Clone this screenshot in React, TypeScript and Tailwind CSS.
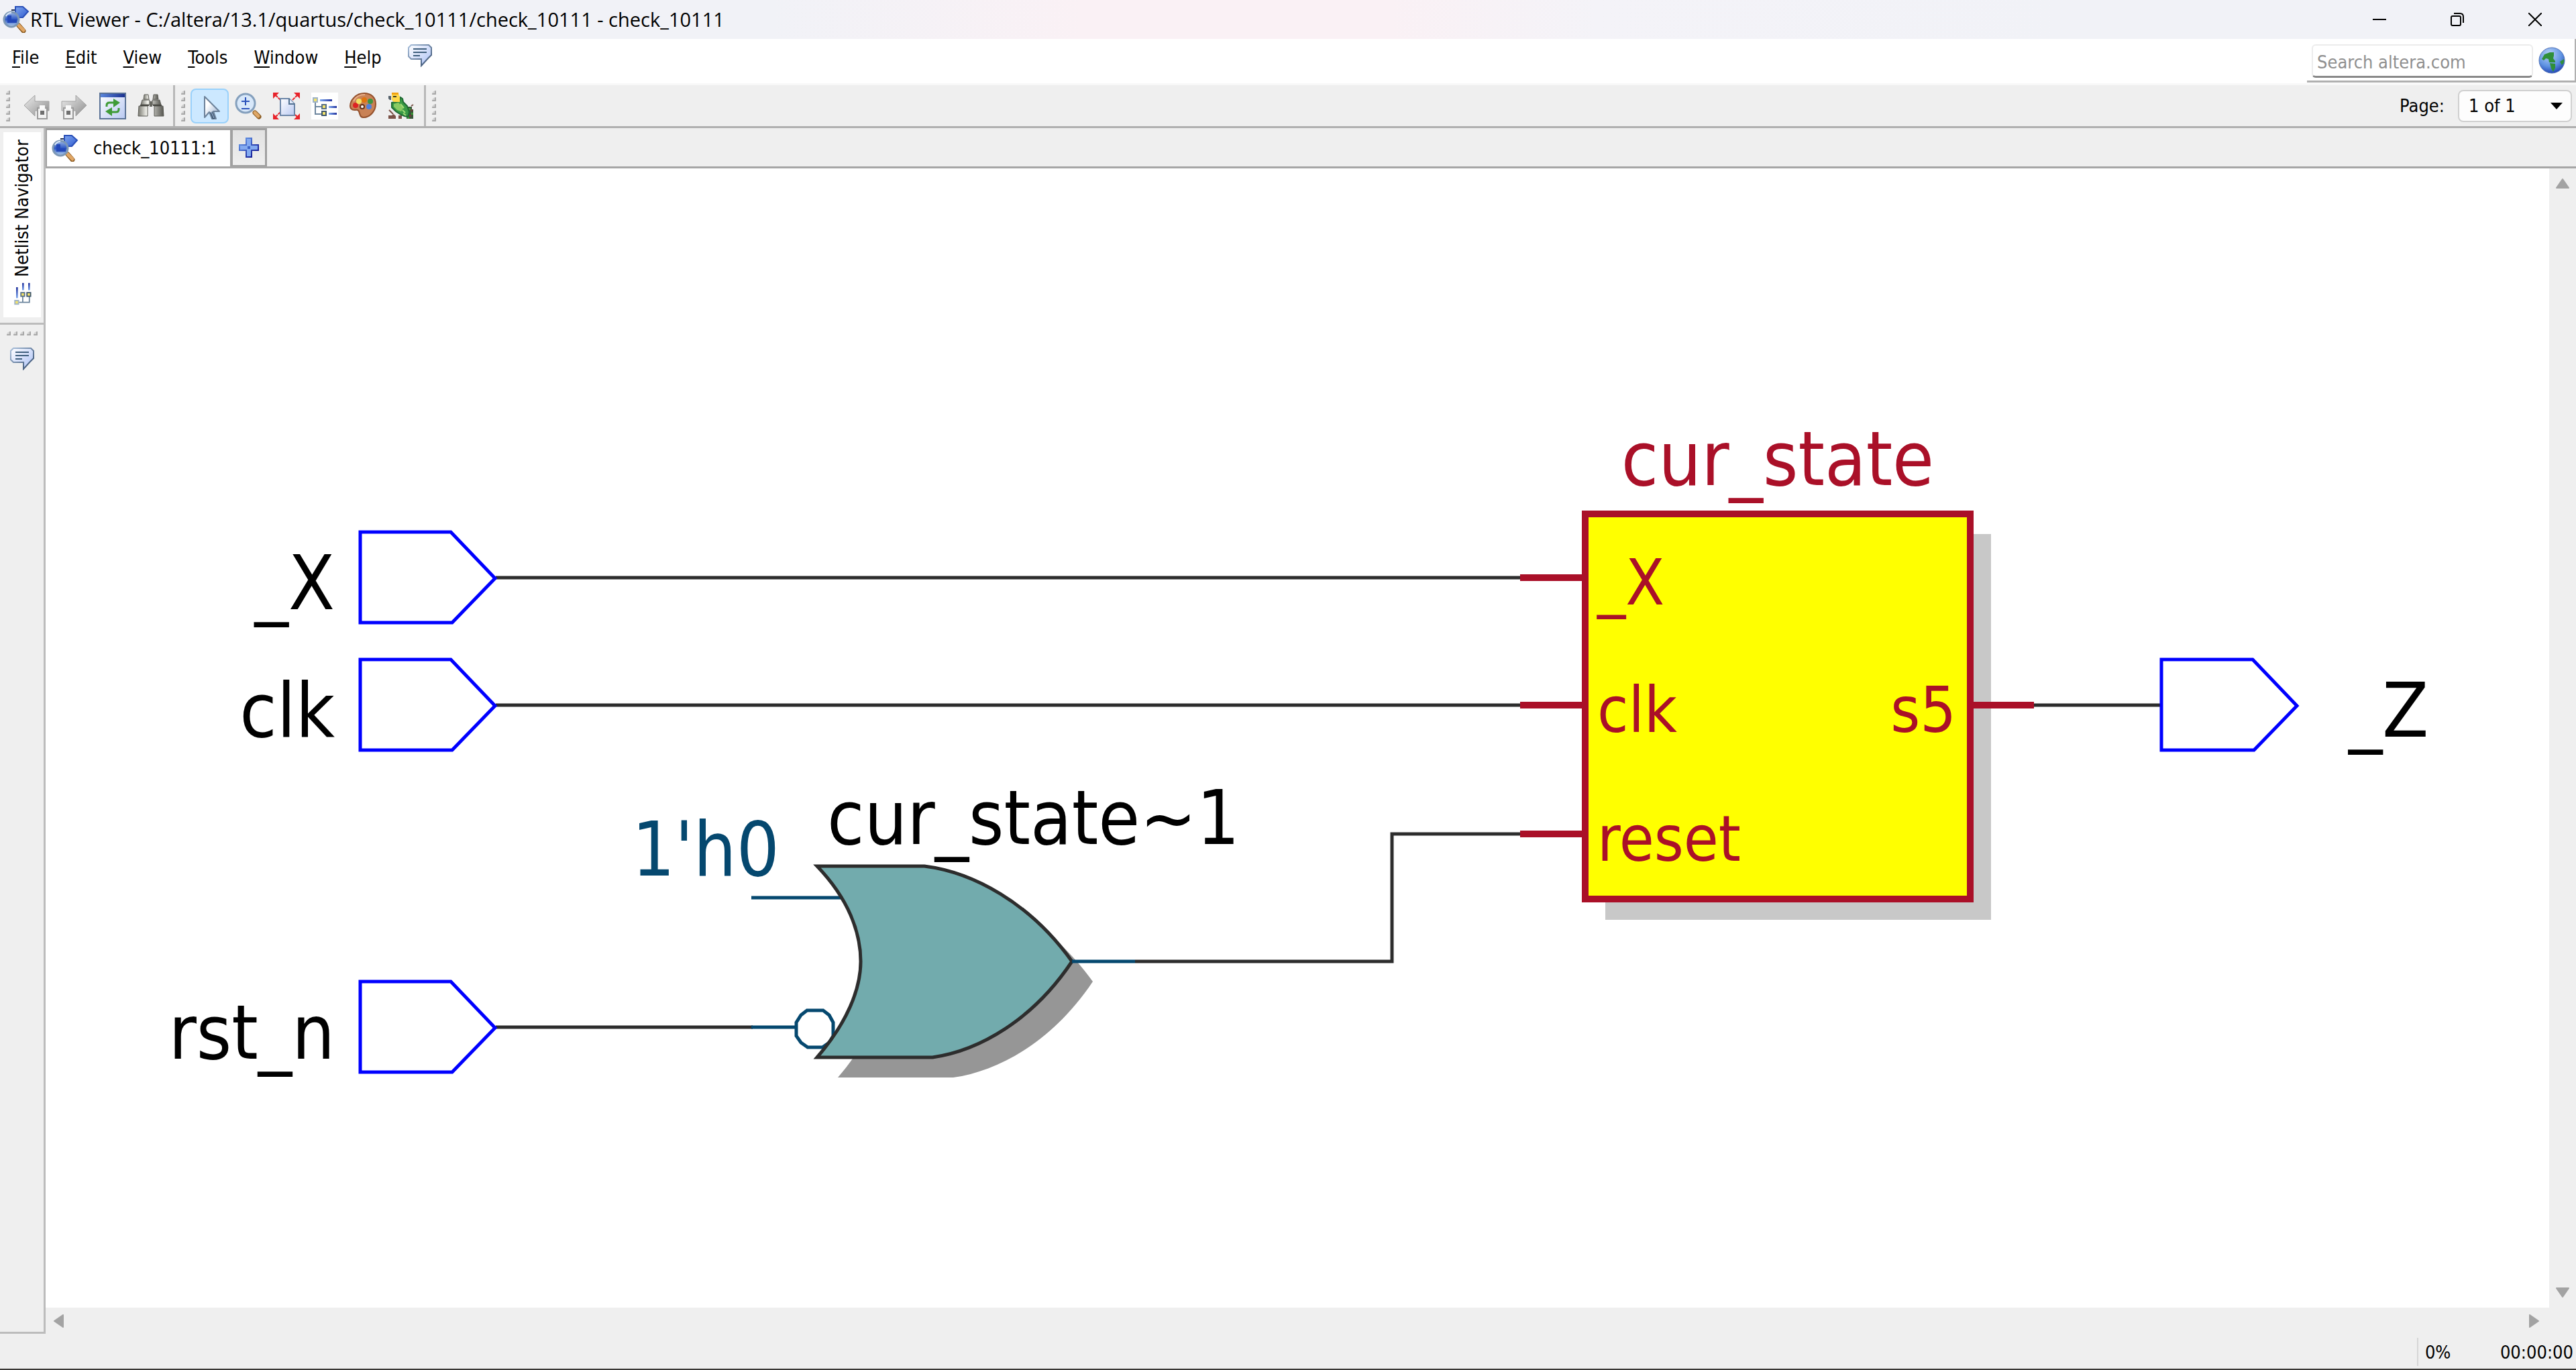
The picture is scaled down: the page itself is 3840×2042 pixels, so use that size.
import type { ReactNode } from "react";

const UI = "font-['DejaVu_Sans_Condensed','DejaVu_Sans',sans-serif]";

function RtlIcon() {
  return (
    <svg viewBox="0 0 40 40" className="h-10 w-10 shrink-0" aria-hidden="true">
      <defs>
        <linearGradient id="pent" x1="0" y1="0" x2="1" y2="1">
          <stop offset="0" stopColor="#7fa6ee" />
          <stop offset="1" stopColor="#2f5bd0" />
        </linearGradient>
        <linearGradient id="lens" x1="0" y1="0" x2="0" y2="1">
          <stop offset="0" stopColor="#9db9e6" />
          <stop offset="0.5" stopColor="#2c56c4" />
          <stop offset="1" stopColor="#b9d6ef" />
        </linearGradient>
      </defs>
      <path d="M13 6h6" stroke="#1f2e50" strokeWidth="2" />
      <path d="M19 1h11l8 7-8 9H19z" fill="url(#pent)" stroke="#2a50b8" strokeWidth="2" />
      <path d="M24 29l7 8" stroke="#8a5a20" strokeWidth="7" strokeLinecap="round" />
      <path d="M24 29l7 7" stroke="#e0a665" strokeWidth="5" strokeLinecap="round" />
      <circle cx="13" cy="20" r="11" fill="url(#lens)" stroke="#7c97b5" strokeWidth="3" />
      <path d="M7 14h6v6h8v5H7z" fill="#2348b8" />
      <path d="M5 15a9 9 0 0 1 8-5" stroke="#dbe8f8" strokeWidth="2" fill="none" />
    </svg>
  );
}

function ChatIcon() {
  return (
    <svg viewBox="0 0 36 34" className="h-[34px] w-9" aria-hidden="true">
      <defs>
        <linearGradient id="chat" x1="0" y1="0" x2="1" y2="1">
          <stop offset="0" stopColor="#ffffff" />
          <stop offset="1" stopColor="#a9bff5" />
        </linearGradient>
        <linearGradient id="chatEdge" x1="0" y1="0" x2="1" y2="1">
          <stop offset="0" stopColor="#a9c0dc" />
          <stop offset="1" stopColor="#31496b" />
        </linearGradient>
      </defs>
      <path d="M5 1h26l4 4v11l-5 5-10 11V22H5l-4-4V5z" fill="url(#chat)" stroke="url(#chatEdge)" strokeWidth="2" />
      <path d="M8 7h20M8 12h20M8 17h10" stroke="#3f5f7d" strokeWidth="2" />
    </svg>
  );
}

function TreeIcon({ className }: { className: string }) {
  return (
    <svg viewBox="0 0 40 40" className={className} aria-hidden="true">
      <defs>
        <linearGradient id="bar" x1="0" y1="0" x2="1" y2="0">
          <stop offset="0" stopColor="#7faaf0" />
          <stop offset="1" stopColor="#20309c" />
        </linearGradient>
      </defs>
      <path d="M6 15v17h10M6 21h10" stroke="#6d869e" strokeWidth="2" fill="none" />
      <rect x="3" y="8" width="6" height="6" fill="#f4e36a" stroke="#9db2c6" strokeWidth="2" />
      <rect x="16" y="18" width="6" height="6" fill="#f4e36a" stroke="#566f86" strokeWidth="2" />
      <rect x="16" y="28" width="6" height="6" fill="#f4e36a" stroke="#3e566c" strokeWidth="2" />
      <rect x="13" y="10" width="18" height="3" fill="url(#bar)" />
      <rect x="26" y="20" width="12" height="3" fill="url(#bar)" />
      <rect x="26" y="30" width="12" height="3" fill="url(#bar)" />
    </svg>
  );
}

function ArrowIcon({ flip }: { flip?: boolean }) {
  return (
    <svg viewBox="0 0 40 40" className="h-10 w-10" aria-hidden="true">
      <defs>
        <linearGradient id="grey" x1="0" y1="0" x2="1" y2="1">
          <stop offset="0" stopColor="#eeeeee" />
          <stop offset="1" stopColor="#8c8c8c" />
        </linearGradient>
      </defs>
      <path
        d={flip ? "M38 19L22 4v9H1v14h21v8z" : "M2 19L18 4v9h21v14H18v8z"}
        fill="url(#grey)"
        stroke="#a2a2a2"
        strokeWidth="1"
      />
      <path d={flip ? "M4 23h14v16H4z" : "M22 23h14v16H22z"} fill="#f2f2f2" stroke="#9a9a9a" strokeWidth="2" />
      <path d={flip ? "M7 19h8v6H7z" : "M25 19h8v6h-8z"} fill="#fafafa" />
      <path d={flip ? "M8 27h6v6H8z" : "M26 27h6v6h-6z"} fill="#6f6f6f" />
    </svg>
  );
}

function RefreshIcon() {
  return (
    <svg viewBox="0 0 40 40" className="h-10 w-10" aria-hidden="true">
      <defs>
        <linearGradient id="win" x1="0" y1="0" x2="1" y2="1">
          <stop offset="0" stopColor="#ffffff" />
          <stop offset="1" stopColor="#b9c9f2" />
        </linearGradient>
        <linearGradient id="winBar" x1="0" y1="0" x2="1" y2="0">
          <stop offset="0" stopColor="#5a86dc" />
          <stop offset="1" stopColor="#1b3190" />
        </linearGradient>
      </defs>
      <rect x="1" y="1" width="38" height="38" fill="url(#win)" stroke="#5a7296" strokeWidth="2" />
      <rect x="2" y="2" width="36" height="5" fill="url(#winBar)" />
      <path d="M11 21v-2q0-4 4-4h7M29 23v2q0 4-4 4h-7" stroke="#3f9b37" strokeWidth="3" fill="none" />
      <path d="M21 9l10 6-10 7zM19 22l-10 6 10 7z" fill="#3f9b37" />
    </svg>
  );
}

function BinocularsIcon() {
  return (
    <svg viewBox="0 0 40 40" className="h-10 w-10" aria-hidden="true">
      <defs>
        <linearGradient id="metal" x1="0" y1="0" x2="1" y2="0">
          <stop offset="0" stopColor="#77776f" />
          <stop offset="0.35" stopColor="#f8f8f2" />
          <stop offset="1" stopColor="#55554f" />
        </linearGradient>
      </defs>
      <g fill="url(#metal)" stroke="#5b5b55" strokeWidth="1">
        <path d="M10 3h6l1 7H9zM24 3h6l1 7h-8z" />
        <path d="M7 11h11v7H5zM22 11h11l2 7H22z" />
        <path d="M2 20h13v15H1zM25 20h13l1 15H25z" />
      </g>
      <path d="M18 13h4v8h-4z" fill="#66665f" />
      <path d="M4 19h13M23 19h13" stroke="#45453f" strokeWidth="2" />
    </svg>
  );
}

function PointerIcon() {
  return (
    <svg viewBox="0 0 40 40" className="h-10 w-10" aria-hidden="true">
      <defs>
        <linearGradient id="ptr" x1="0" y1="0" x2="1" y2="1">
          <stop offset="0.3" stopColor="#ffffff" />
          <stop offset="1" stopColor="#8aa3c8" />
        </linearGradient>
      </defs>
      <path
        d="M12 6v31l7-8 4 10h6l-4-11h9z"
        fill="url(#ptr)"
        stroke="#6c8199"
        strokeWidth="2"
        strokeLinejoin="round"
      />
      <path d="M22 29l4 10" stroke="#3d566f" strokeWidth="4" />
      <path d="M22 29l4 9" stroke="#b8cdf0" strokeWidth="1" />
    </svg>
  );
}

function ZoomIcon() {
  return (
    <svg viewBox="0 0 40 40" className="h-10 w-10" aria-hidden="true">
      <path d="M30 30l6 6" stroke="#8a5a20" strokeWidth="7" strokeLinecap="round" />
      <path d="M30 30l5 5" stroke="#dfa766" strokeWidth="5" strokeLinecap="round" />
      <circle cx="16" cy="16" r="14" fill="#d8e8fa" stroke="#85a0bd" strokeWidth="3" />
      <path d="M16 7v12M10 13h12M10 24h12" stroke="#2c53bb" strokeWidth="2" />
    </svg>
  );
}

function FitIcon() {
  return (
    <svg viewBox="0 0 40 40" className="h-10 w-10" aria-hidden="true">
      <path d="M2 2l9 9M38 2l-9 9M2 38l9-9M38 38l-9-9" stroke="#e8222a" strokeWidth="2" strokeDasharray="7 1" />
      <path d="M0 0h9L0 9zM40 0v9L31 0zM0 40v-9l9 9zM40 40h-9l9-9z" fill="#e8222a" />
      <path d="M11 9h13l8 8v17H11z" fill="url(#win)" stroke="#6c86a8" strokeWidth="2" />
      <path d="M24 9v8h8" fill="#dfe9fa" stroke="#51708f" strokeWidth="2" />
    </svg>
  );
}

function PaletteIcon() {
  return (
    <svg viewBox="0 0 40 40" className="h-10 w-10" aria-hidden="true">
      <path
        d="M22 1C10 1 1 11 1 20c0 5 3 6 7 6 5-1 6 1 7 5s2 6 6 6c10 0 18-10 18-20C39 7 32 1 22 1z"
        fill="#c98256"
        stroke="#93502c"
        strokeWidth="2"
      />
      <path d="M6 13C9 6 16 3 23 3" stroke="#e9b08c" strokeWidth="2" fill="none" />
      <circle cx="9" cy="19" r="4" fill="#dd2323" />
      <circle cx="14" cy="13" r="4" fill="#f3e163" />
      <circle cx="22" cy="11" r="4" fill="#e0750c" />
      <circle cx="31" cy="13" r="4" fill="#3f9440" />
      <circle cx="29" cy="21" r="4" fill="#4f80dd" />
      <circle cx="19" cy="21" r="3" fill="#ffffff" stroke="#60301a" strokeWidth="2" />
    </svg>
  );
}

function ParrotIcon() {
  return (
    <svg viewBox="0 0 40 40" className="h-10 w-10" aria-hidden="true">
      <path d="M1 34h5l3-2 3 3v4H1zM16 34h5v5h-5z" fill="#7a5146" />
      <path d="M2 26l6 6M35 20l3-2" stroke="#7a5146" strokeWidth="2" />
      <path d="M26 25h4v-4h6v4h2v14H28v-5h-4z" fill="#39553a" />
      <path d="M28 27h3v3h-3zM34 25h3v3h-3zM32 33h3v3h-3z" fill="#6a4036" />
      <path d="M31 23h3v3h-3zM29 36h3v3h-3zM35 30h3v3h-3z" fill="#3f9b37" />
      <path d="M6 15l11-2 2-6 3 2 1 5 6 6 3 9-2 7-5-1-5-2-8-5-6-6z" fill="#3a9a45" stroke="#1f6a33" strokeWidth="2" />
      <path d="M9 17l7-2 7 8-3 5-6-2-5-5z" fill="#8acb62" />
      <path d="M19 17l5 6M22 26l4 4M23 31l4 3" stroke="#a5dc78" strokeWidth="2" />
      <path d="M6 2h10l2 4v8H9l-3-3z" fill="#ffd84a" />
      <path d="M6 0h10v3H6z" fill="#f2a20f" />
      <path d="M8 6h5" stroke="#3c3c20" strokeWidth="2" />
      <path d="M1 5h4v6H3L1 9z" fill="#56626c" />
    </svg>
  );
}

function PlusIcon() {
  return (
    <svg viewBox="0 0 30 30" className="h-[30px] w-[30px]" aria-hidden="true">
      <defs>
        <linearGradient id="plusEdge" x1="0" y1="0" x2="1" y2="1">
          <stop offset="0.2" stopColor="#5b87dc" />
          <stop offset="0.8" stopColor="#16209a" />
        </linearGradient>
      </defs>
      <path d="M11 1h8v10h10v8H19v10h-8V19H1v-8h10z" fill="#83aaf0" stroke="url(#plusEdge)" strokeWidth="2" />
      <path d="M13 13h4v4h-4z" fill="#3c63c8" />
    </svg>
  );
}

function GlobeIcon() {
  return (
    <svg viewBox="0 0 40 40" className="h-10 w-10" aria-hidden="true">
      <defs>
        <radialGradient id="sea" cx="0.4" cy="0.25" r="0.8">
          <stop offset="0" stopColor="#b9d2f7" />
          <stop offset="0.6" stopColor="#5f93e2" />
          <stop offset="1" stopColor="#1d3fb0" />
        </radialGradient>
      </defs>
      <circle cx="20" cy="20" r="19" fill="url(#sea)" stroke="#4d6fb5" strokeWidth="1" />
      <path d="M5 18l4-7 8-3h6v5l-1 4 3 4v2h-9l-1-5-4-1-3 3zM17 24l8 1v6l-3 6-3-5zM32 22l6-4v5l-3 4z" fill="#2f8f3a" />
    </svg>
  );
}

function Grip({ vertical }: { vertical?: boolean }) {
  return (
    <div className={vertical ? "flex flex-col gap-1" : "flex gap-1"} aria-hidden="true">
      {[0, 1, 2, 3, 4].map((i) => (
        <span key={i} className="h-1.5 w-1.5 rounded-tl-full border-r-2 border-b-2 border-[#a8a8a8] bg-[#d4d4d4]" />
      ))}
    </div>
  );
}

function ToolButton({ label, active, children }: { label: string; active?: boolean; children: ReactNode }) {
  return (
    <button
      type="button"
      aria-label={label}
      aria-pressed={active}
      className={
        active
          ? "flex h-[52px] w-[57px] items-center justify-center rounded-lg border-2 border-[#99d1fb] bg-[#cce8ff]"
          : "flex h-[52px] w-[57px] items-center justify-center"
      }
    >
      {children}
    </button>
  );
}

function ScrollArrow({ label, points }: { label: string; points: string }) {
  return (
    <button type="button" aria-label={label} className="flex h-10 w-10 items-center justify-center">
      <svg viewBox="0 0 20 20" className="h-5 w-5" aria-hidden="true">
        <polygon points={points} fill="#a3a3a3" stroke="#a3a3a3" strokeWidth="2" strokeLinejoin="round" />
      </svg>
    </button>
  );
}

const menus = ["File", "Edit", "View", "Tools", "Window", "Help"];

const inputs = [
  { name: "_X", y: 861 },
  { name: "clk", y: 1051 },
  { name: "rst_n", y: 1531 },
];

const statePins = [
  { name: "_X", y: 861 },
  { name: "clk", y: 1051 },
  { name: "reset", y: 1243 },
];

const GATE =
  "M1218 1291H1378C1450 1300 1535 1345 1598 1433C1540 1520 1460 1566 1390 1576H1218C1262 1525 1283 1475 1283 1433C1283 1390 1265 1340 1218 1291Z";

function Schematic() {
  return (
    <svg
      viewBox="68 251 3732 1697"
      className={`block h-auto w-full ${UI}`}
      role="img"
      aria-label="RTL schematic of check_10111"
    >
      <g fill="none" stroke="#2d2d2d" strokeWidth="5">
        <path d="M739 861H2268" />
        <path d="M739 1051H2268" />
        <path d="M739 1531H1122" />
        <path d="M1692 1433H2075V1243H2268" />
        <path d="M3030 1051H3222" />
      </g>

      {inputs.map((p) => (
        <g key={p.name}>
          <path
            d={`M537 ${p.y - 68}h135l66 69l-64 66h-137z`}
            fill="#fff"
            stroke="#0000ff"
            strokeWidth="5"
          />
          <text x="499" y={p.y + 47} textAnchor="end" fontSize="112" fill="#000">
            {p.name}
          </text>
        </g>
      ))}

      <path d="M3222 983h136l66 69l-64 66h-138z" fill="#fff" stroke="#0000ff" strokeWidth="5" />
      <text x="3501" y="1098" fontSize="112" fill="#000">
        _Z
      </text>

      <path d={GATE} fill="#969696" transform="translate(31 30)" />
      <g fill="none" stroke="#05486f" strokeWidth="5">
        <path d="M1120 1338H1256" />
        <path d="M1120 1531H1187" />
        <path d="M1203 1506h24l9 7l6 11v20l-6 10l-10 7h-22l-10-7l-7-10v-20l7-11z" fill="#fff" />
      </g>
      <path d={GATE} fill="#72abad" stroke="#2d2d2d" strokeWidth="5" />
      <path d="M1598 1433H1692" stroke="#05486f" strokeWidth="5" />
      <text x="942" y="1305" fontSize="112" fill="#05486f">
        1'h0
      </text>
      <text x="1233" y="1258" fontSize="112" fill="#000">
        cur_state~1
      </text>

      <rect x="2393" y="796" width="575" height="575" fill="#c8c8c8" />
      <rect x="2363" y="766" width="574" height="574" fill="#ffff00" stroke="#aa1028" strokeWidth="10" />
      <text x="2650" y="723" textAnchor="middle" fontSize="112" fill="#aa1028">
        cur_state
      </text>
      {statePins.map((p) => (
        <g key={p.name}>
          <path d={`M2266 ${p.y}h95`} stroke="#aa1028" strokeWidth="10" />
          <text x="2381" y={p.y + 40} fontSize="94" fill="#aa1028">
            {p.name}
          </text>
        </g>
      ))}
      <path d="M2940 1051h92" stroke="#aa1028" strokeWidth="10" />
      <text x="2916" y="1091" textAnchor="end" fontSize="94" fill="#aa1028">
        s5
      </text>
    </svg>
  );
}

export default function App() {
  return (
    <div className={`flex min-h-screen flex-col bg-[#efefef] text-[27px] leading-8 text-black ${UI}`}>
      <header className="flex h-[58px] items-center bg-[linear-gradient(90deg,#f1f2f7_30%,#faf1f5_42%,#faf1f5_54%,#f4f3f8_62%,#f1f2f7_80%)] pl-1">
        <RtlIcon />
        <h1 className="flex-1 pl-px font-['Open_Sans','Noto_Sans',sans-serif] text-[29px]">
          RTL Viewer - C:/altera/13.1/quartus/check_10111/check_10111 - check_10111
        </h1>
        <div className="flex pr-[3px]">
          <button type="button" aria-label="Minimize" className="flex h-[58px] w-[116px] items-center justify-center">
            <svg viewBox="0 0 20 20" className="h-5 w-5" aria-hidden="true">
              <path d="M0 10h20" stroke="#000" strokeWidth="2" />
            </svg>
          </button>
          <button type="button" aria-label="Restore" className="flex h-[58px] w-[116px] items-center justify-center">
            <svg viewBox="0 0 20 20" className="h-5 w-5" fill="none" stroke="#000" strokeWidth="2" aria-hidden="true">
              <rect x="1" y="5" width="14" height="14" rx="2" />
              <path d="M5 1h9q5 0 5 5v9" />
            </svg>
          </button>
          <button type="button" aria-label="Close" className="flex h-[58px] w-[116px] items-center justify-center">
            <svg viewBox="0 0 20 20" className="h-5 w-5" aria-hidden="true">
              <path d="M0 0l20 20M20 0L0 20" stroke="#000" strokeWidth="2" />
            </svg>
          </button>
        </div>
      </header>

      <div className="flex h-[66px] items-start justify-between bg-white">
        <nav className="flex items-start gap-[39px] pt-2 pl-[18px]" aria-label="Main menu">
          {menus.map((m) => (
            <button key={m} type="button" className="h-10">
              <span className="underline decoration-2 underline-offset-4">{m[0]}</span>
              {m.slice(1)}
            </button>
          ))}
          <button type="button" aria-label="Feedback">
            <ChatIcon />
          </button>
        </nav>
        <form className="flex h-[65px] items-start gap-2 border-r-2 border-b-3 border-[#b0b0b0] pt-2 pr-[14px] pl-[7px]">
          <input
            type="search"
            aria-label="Search altera.com"
            placeholder="Search altera.com"
            className="h-[50px] w-[330px] rounded-md border-2 border-b-3 border-[#ececec] border-b-[#8a8a8a] bg-white px-1.5 pt-1 outline-none placeholder:text-[#8f8f8f]"
          />
          <button type="button" aria-label="Search" className="pt-1">
            <GlobeIcon />
          </button>
        </form>
      </div>

      <div className="flex h-[67px] items-center border-t-3 border-b-3 border-t-[#f8f8f8] border-b-[#b0b0b0]">
        <div className="flex h-full items-center border-r-3 border-[#b8b8b8] pr-[5px] pl-[9px]">
          <Grip vertical />
          <div className="flex pl-2.5">
            <ToolButton label="Back">
              <ArrowIcon />
            </ToolButton>
            <ToolButton label="Forward">
              <ArrowIcon flip />
            </ToolButton>
            <ToolButton label="Refresh">
              <RefreshIcon />
            </ToolButton>
            <ToolButton label="Find">
              <BinocularsIcon />
            </ToolButton>
          </div>
        </div>
        <div className="flex h-full items-center border-r-3 border-[#b8b8b8] pr-[6px] pl-[9px]">
          <Grip vertical />
          <div className="flex pl-2">
            <ToolButton label="Selection tool" active>
              <PointerIcon />
            </ToolButton>
            <ToolButton label="Zoom tool">
              <ZoomIcon />
            </ToolButton>
            <ToolButton label="Fit in window">
              <FitIcon />
            </ToolButton>
            <ToolButton label="Netlist navigator">
              <TreeIcon className="h-10 w-10 bg-white" />
            </ToolButton>
            <ToolButton label="Color settings">
              <PaletteIcon />
            </ToolButton>
            <ToolButton label="Bird's eye view">
              <ParrotIcon />
            </ToolButton>
          </div>
        </div>
        <div className="flex-1 pl-[9px]">
          <Grip vertical />
        </div>
        <label htmlFor="page" className="pr-5">
          Page:
        </label>
        <div className="relative mr-1.5">
          <select
            id="page"
            className="block h-12 w-[170px] appearance-none rounded-lg border-2 border-[#d0d0d0] bg-[#fdfdfd] pl-3.5"
          >
            <option>1 of 1</option>
          </select>
          <svg
            viewBox="0 0 18 10"
            className="pointer-events-none absolute top-[19px] right-3.5 h-2.5 w-[18px]"
            aria-hidden="true"
          >
            <polygon points="0,0 18,0 9,10" fill="#000" />
          </svg>
        </div>
      </div>

      <main className="flex flex-1">
        <aside className="mb-[52px] flex w-[68px] shrink-0 flex-col border-r-3 border-b-3 border-[#bcbcbc]">
          <div className="border-b-3 border-[#bcbcbc] pt-1.5 pr-1 pb-2 pl-[5px]">
            <button
              type="button"
              className="flex h-[276px] w-full rotate-180 items-center gap-1 bg-white pt-3.5 [writing-mode:vertical-rl]"
            >
              <TreeIcon className="h-[42px] w-[36px] rotate-90" />
              Netlist Navigator
            </button>
          </div>
          <div className="flex flex-col items-center gap-[18px] pt-2.5">
            <Grip />
            <button type="button" aria-label="Messages">
              <ChatIcon />
            </button>
          </div>
        </aside>

        <section className="flex min-w-0 flex-1 flex-col">
          <div className="flex h-[60px] items-stretch border-b-3 border-[#a6a6a6]" role="tablist">
            <button
              type="button"
              role="tab"
              aria-selected="true"
              className="flex items-center gap-[22px] border-t-3 border-r-4 border-l-2 border-[#a0a0a0] bg-white pr-5 pl-[7px]"
            >
              <RtlIcon />
              check_10111:1
            </button>
            <button
              type="button"
              aria-label="New tab"
              className="flex w-[51px] items-center justify-center border-t-3 border-r-3 border-b-2 border-[#a0a0a0] bg-linear-to-b from-[#e2e2e2] to-[#efefef]"
            >
              <PlusIcon />
            </button>
          </div>
          <div className="flex flex-1">
            <div className="min-w-0 flex-1 bg-white">
              <Schematic />
            </div>
            <div className="flex w-10 shrink-0 flex-col justify-between pt-0.5">
              <ScrollArrow label="Scroll up" points="10,4 19,17 1,17" />
              <ScrollArrow label="Scroll down" points="10,14 19,1 1,1" />
            </div>
          </div>
          <div className="flex h-10 items-center justify-between pr-[41px]">
            <ScrollArrow label="Scroll left" points="3,10 16,1 16,19" />
            <ScrollArrow label="Scroll right" points="15,10 2,1 2,19" />
          </div>
          <footer className="flex h-[51px] items-center justify-end pr-1">
            <div className="flex h-[42px] items-center justify-between border-l-2 border-[#d6d6d6] pt-0.5 pl-2.5">
              <span className="w-[112px]">0%</span>
              <span>00:00:00</span>
            </div>
          </footer>
        </section>
      </main>
      <div className="h-0.5 bg-[#3a3835]" />
    </div>
  );
}
